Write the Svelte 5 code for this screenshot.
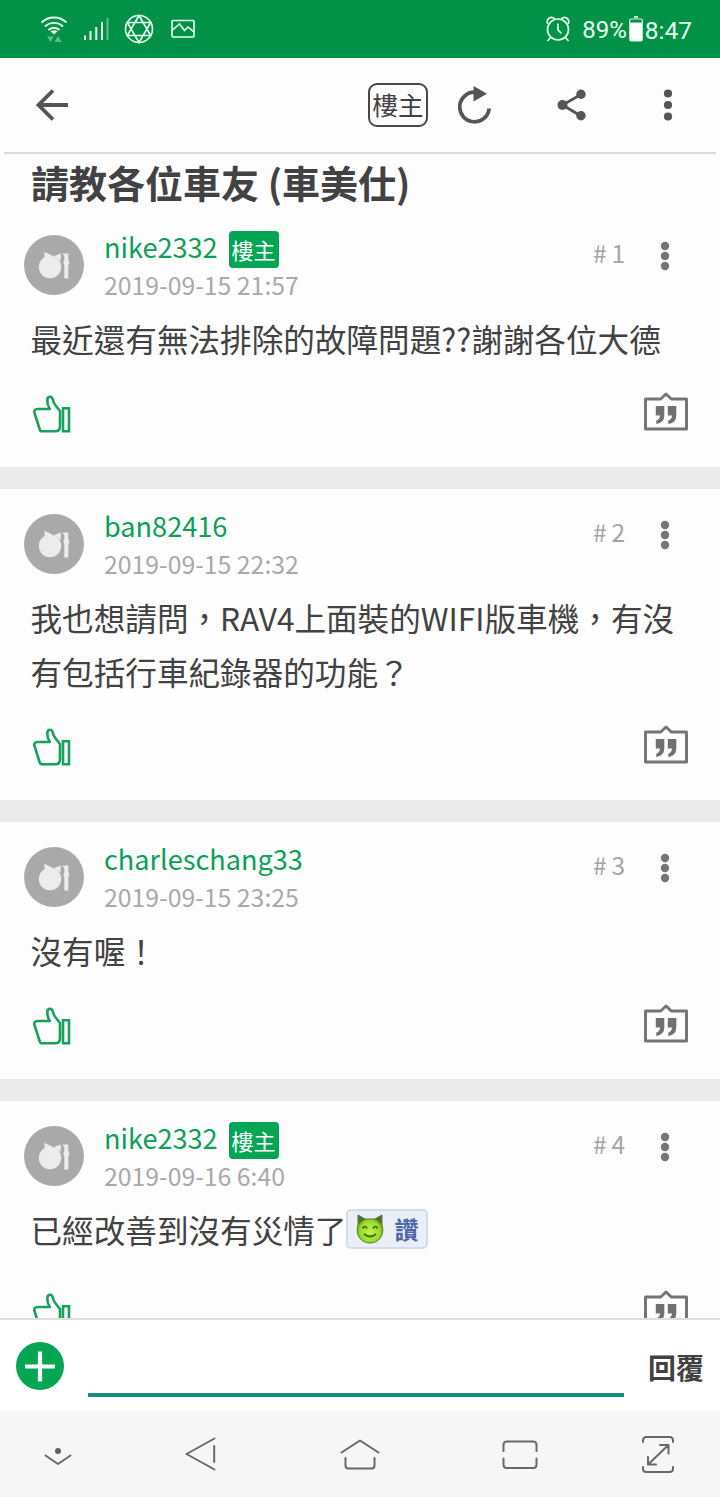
<script lang="ts">
	type Post = {
		floor: number;
		author: string;
		date: string;
		isOwner?: boolean;
		lines: string[];
		sticker?: string;
	};

	const title = '請教各位車友 (車美仕)';

	const posts: Post[] = [
		{
			floor: 1,
			author: 'nike2332',
			date: '2019-09-15 21:57',
			isOwner: true,
			lines: ['最近還有無法排除的故障問題??謝謝各位大德']
		},
		{
			floor: 2,
			author: 'ban82416',
			date: '2019-09-15 22:32',
			lines: ['我也想請問，RAV4上面裝的WIFI版車機，有沒', '有包括行車紀錄器的功能？']
		},
		{
			floor: 3,
			author: 'charleschang33',
			date: '2019-09-15 23:25',
			lines: ['沒有喔！']
		},
		{
			floor: 4,
			author: 'nike2332',
			date: '2019-09-16 6:40',
			isOwner: true,
			lines: ['已經改善到沒有災情了'],
			sticker: '讚'
		}
	];

	let reply = $state('');
</script>

<div class="screen" lang="zh-Hant">
	<div class="status-bar">
		<div class="status-bar__left">
			<svg width="28" height="30" viewBox="0 0 28 30" fill="none" stroke="#e6fff0" stroke-width="1.9">
				<path d="M1.5 8.5C8.5 1.8 19.5 1.8 26.5 8.5" />
				<path d="M5 12.5C10 7.6 18 7.6 23 12.5" />
				<path d="M8.5 16C11.600 13 16.400 13 19.5 16" />
				<path d="M10.5 17.300C12.5 15.800 15.5 15.800 17.5 17.300L14 20.5z" fill="#fff" stroke="none" />
				<path d="M7 22.5h7l-3.5 5.5zM14.5 28l3.5-6 3.5 6z" fill="#5ec08a" stroke="none" />
			</svg>
			<svg class="signal" width="26" height="24" viewBox="0 0 26 24" fill="#e6fff0">
				<path d="M1 18.5h2V23H1zM6.5 14h2v9h-2zM12.3 10h2v13h-2zM18 5h2v18h-2z" />
				<path d="M23.5 1h2v22h-2z" fill="#5ec08a" />
			</svg>
			<svg class="hexagram" width="30" height="30" viewBox="0 0 30 30" fill="none" stroke="#e6fff0" stroke-width="1.6">
				<circle cx="15" cy="15" r="13.5" />
				<path d="M15 1.5L26.7 21.5H3.3zM15 28.5L3.3 8.5h23.4z" />
			</svg>
			<svg class="picture" width="24" height="20" viewBox="0 0 24 20" fill="none" stroke="#e6fff0" stroke-width="1.6">
				<rect x="1" y="1.5" width="22" height="16.5" rx="1" />
				<path d="M1 11.5L8.5 5l5 6.5 3.5-3.500 6 5" />
			</svg>
		</div>
		<div class="status-bar__right">
			<svg class="alarm" width="24" height="26" viewBox="0 0 24 26" fill="none" stroke="#dcffea" stroke-width="1.7">
				<circle cx="12" cy="13.5" r="10.5" />
				<path d="M12 7.5V14l3.5 3.5M4.5 21.5L1.500 25M19.5 21.5l3 3.5M1.8 8C-.5 3 5 -.5 8.8 3M22.2 8C24.5 3 19 -.5 15.2 3" />
			</svg>
			<span class="percent">89%</span>
			<svg class="battery" width="14" height="26" viewBox="0 0 14 26" fill="none">
				<path d="M5 1h4" stroke="#fff" stroke-width="1.5" />
				<rect x=".75" y="3" width="12.5" height="22" rx="1.5" stroke="#d3f8e1" stroke-width="1.2" />
				<path d="M1 6.5h12V25H1z" fill="#fff" />
			</svg>
			<span class="clock">8:47</span>
		</div>
	</div>

	<header class="app-bar">
		<button class="back" aria-label="返回">
			<svg width="34" height="34" viewBox="0 0 34 34" fill="none" stroke="#555" stroke-width="3.8">
				<path d="M33 17H4M18 2.5L3.5 17 18 31.5" />
			</svg>
		</button>
		<button class="owner-filter">樓主</button>
		<button class="reload" aria-label="重新整理">
			<svg width="34" height="40" viewBox="0 0 34 40" fill="none">
				<path d="M31.2 23.5A14.8 14.8 0 1 1 17 7.2" stroke="#555" stroke-width="3.7" />
				<path d="M15.5 1L29 8.8 15.5 16.5z" fill="#555" />
			</svg>
		</button>
		<button class="share" aria-label="分享">
			<svg width="30" height="32" viewBox="0 0 30 32" fill="#555">
				<path d="M24 5.5L5.5 16 24 27" fill="none" stroke="#555" stroke-width="2.8" />
				<circle cx="5.5" cy="16" r="5" />
				<circle cx="24" cy="5.2" r="4.7" />
				<circle cx="24" cy="26.8" r="4.7" />
			</svg>
		</button>
		<button class="more" aria-label="更多">
			<svg width="10" height="32" viewBox="0 0 10 32" fill="#555">
				<circle cx="5" cy="4.5" r="4.1" />
				<circle cx="5" cy="16" r="4.1" />
				<circle cx="5" cy="27.5" r="4.1" />
			</svg>
		</button>
	</header>

	<main class="thread">
		<h1>{title}</h1>
		{#each posts as post (post.floor)}
			<article class="post">
				<div class="post__head">
					<svg class="avatar" width="60" height="60" viewBox="0 0 60 60">
						<circle cx="30" cy="30" r="30" fill="#a9a9a9" />
						<g fill="#ececec">
							<circle cx="26" cy="32" r="11.2" />
							<path d="M20.3 16.7L20.8 24l8.200-3zM37 18.500L30 21l6.500 5z" />
							<path d="M38.500 18.500H44.300V25l1.200 2.500-1.200 3V43.500h-4V30.500l-1-3 1-2.500v-3.500z" />
						</g>
					</svg>
					<div class="meta">
						<div class="meta__name">
							<span>{post.author}</span>
							{#if post.isOwner}
								<span class="owner-tag">樓主</span>
							{/if}
						</div>
						<time>{post.date}</time>
					</div>
					<span class="floor">#{'\u2009'}{post.floor}</span>
					<button class="post__menu" aria-label="選單">
						<svg width="10" height="30" viewBox="0 0 10 30" fill="#757575">
							<circle cx="5" cy="5" r="4.2" />
							<circle cx="5" cy="15" r="4.2" />
							<circle cx="5" cy="25" r="4.2" />
						</svg>
					</button>
				</div>

				<div class="post__body" class:has-sticker={post.sticker}>
					{#each post.lines as line}
						<p>
							{line}{#if post.sticker}<span class="sticker">
									<svg width="28" height="30" viewBox="0 0 28 30">
										<defs>
											<radialGradient id="imp" cx=".5" cy=".6" r=".6">
												<stop offset="0" stop-color="#c4f24a" />
												<stop offset=".65" stop-color="#99d92c" />
												<stop offset="1" stop-color="#4f861b" />
											</radialGradient>
										</defs>
										<path d="M2 1l7 4h10l7-4v10c3 10-3 18-12 18S-1 21 2 11z" fill="url(#imp)" stroke="#567e27" />
										<path d="M2 1l7 4-6 5zM26 1l-7 4 6 5z" fill="#557028" />
										<path d="M6.5 14.5q2.5-4 4.5 0M17 14.5q2.5-4 4.5 0M8 20q6 5 12 0" fill="none" stroke="#426b13" stroke-width="1.7" />
									</svg>
									<b>{post.sticker}</b>
								</span>{/if}
						</p>
					{/each}
				</div>

				<div class="post__actions">
					<button aria-label="推">
						<svg width="40" height="40" viewBox="0 0 40 40" fill="none" stroke="#16a25a" stroke-width="2.6">
							<path d="M9.300 37.200C8.500 37 8 36.300 7.600 35L2.500 19C1.800 16.500 3 15 5.500 15H17.800C16.500 13 15.300 10.500 15.300 6.500 15.300 4 16.500 2.700 18 2.700c1.600 0 2.500 1.300 3 3.300.4 2.200 1 3.600 2.200 5L28 17v14.500c0 3.500-1.300 5.700-4 5.700z" stroke-linejoin="round" />
							<path d="M31 14.300h6v22.900h-6z" />
						</svg>
					</button>
					<button class="quote" aria-label="引用">
						<svg width="44" height="40" viewBox="0 0 44 40" fill="none">
							<path d="M1.5 7h15.2L22 2l5.3 5h15.2v30h-41z" stroke="#757575" stroke-width="3" stroke-linejoin="round" />
							<path d="M11.800 14h8.5v9q0 8-8 9v-3.500q3.500-.8 3.700-5h-4.200zM23.800 14h8.500v9q0 8-8 9v-3.500q3.500-.8 3.700-5h-4.200z" fill="#707070" />
						</svg>
					</button>
				</div>
			</article>
		{/each}
	</main>

	<form class="reply-bar">
		<button type="button" class="add" aria-label="新增">
			<svg width="48" height="48" viewBox="0 0 48 48">
				<circle cx="24" cy="24" r="24" fill="#04a653" />
				<path d="M9 24.500h30M24 9.500v30" stroke="#fff" stroke-width="4.200" />
			</svg>
		</button>
		<input bind:value={reply} aria-label="回覆內容" />
		<button type="submit" class="send">回覆</button>
	</form>

	<nav class="nav-bar">
		<svg width="36" height="40" viewBox="0 0 36 40">
			<circle cx="18" cy="17" r="3" />
			<path d="M5.5 21.5L18 30l12.5-8.5" />
		</svg>
		<svg class="nav-back" width="36" height="40" viewBox="0 0 36 40">
			<path d="M31.5 4.500L3.500 20l28 15.500M31.200 12v16" />
		</svg>
		<svg class="nav-home" width="40" height="40" viewBox="0 0 40 40">
			<path d="M1.5 18.5L20 6.5l18.500 12M5.500 24v7.500q0 3 3 3h23q3 0 3-3V24" />
		</svg>
		<svg class="nav-recent" width="40" height="40" viewBox="0 0 40 40">
			<path d="M3.500 17v-6q0-3.500 3.500-3.500h26q3.500 0 3.500 3.500v6M3.500 24.500v6q0 3.500 3.500 3.500h26q3.500 0 3.500-3.500v-6" />
		</svg>
		<svg class="nav-full" width="36" height="40" viewBox="0 0 36 40">
			<path d="M3 8V6.500Q3 3 6.500 3h23Q33 3 33 6.500V8M3 33v1.500Q3 38 6.500 38h23q3.500 0 3.500-3.500V33M8 30.500L28.500 11M20 11h8.500v8.500M8 23v7.500h8" />
		</svg>
	</nav>
</div>

<style>
	:global(body) { margin: 0; background: #fdfdfd; }

	.screen {
		display: flex;
		width: 720px;
		height: 1497px;
		overflow: hidden;
		flex-direction: column;
		color: #424242;
		background: #fdfdfd;
		font-family: 'Noto Sans CJK TC', sans-serif;
	}

	svg { display: block; flex: none; }

	button {
		padding: 0;
		color: inherit;
		background: none;
		border: 0;
		font: inherit;
	}

	.status-bar {
		display: flex;
		height: 58px;
		padding: 0 28px 0 40px;
		flex: none;
		align-items: center;
		justify-content: space-between;
		color: #e6fff0;
		background: #029247;
		font-family: Roboto, sans-serif;
		font-size: 24px;
	}

	.status-bar__left,
	.status-bar__right {
		display: flex;
		align-items: center;
	}

	.signal { margin-left: 15px; }
	.hexagram { margin-left: 15px; }
	.picture { margin-left: 17px; }
	.percent { margin: 2px 2px 0 12px; }
	.clock { margin: 2px 0 0 2px; font-size: 24.5px; }

	.app-bar {
		display: flex;
		height: 94px;
		margin: 0 4px;
		padding: 0 43px 0 31px;
		flex: none;
		align-items: center;
		border-bottom: 2px solid #dcdcdc;
	}

	.owner-filter {
		display: flex;
		width: 60px;
		height: 44px;
		margin-left: auto;
		justify-content: center;
		border: 2px solid #484848;
		border-radius: 9px;
		font-size: 25.5px;
		line-height: 38px;
		white-space: nowrap;
	}

	.reload { margin-left: 30px; }
	.share { margin-left: 65px; }
	.more { margin-left: 76px; }

	.thread {
		min-height: 0;
		flex: 1;
		overflow: hidden;
	}

	h1 {
		height: 56px;
		margin: 0;
		padding-left: 31px;
		font-size: 38px;
		font-weight: 700;
		line-height: 56px;
		white-space: nowrap;
	}

	.post { border-bottom: 22px solid #ebebeb; }

	.post__head {
		display: flex;
		height: 101px;
		padding: 0 50px 0 24px;
		box-sizing: border-box;
		align-items: flex-start;
	}

	.avatar { margin-top: 25px; }

	.meta {
		margin: 18px 0 0 20px;
		flex: 1;
	}

	.meta__name {
		display: flex;
		height: 38px;
		gap: 11px;
		align-items: center;
		color: #0ba155;
		font-size: 27.1px;
		line-height: 38px;
	}

	.owner-tag {
		height: 37px;
		padding: 0 3px;
		margin-top: 4px;
		color: #fff;
		background: #04a653;
		border-radius: 4px;
		font-size: 22px;
		line-height: 36px;
	}

	time {
		display: block;
		color: #a9a9a9;
		font-size: 24.8px;
		line-height: 36px;
	}

	.floor {
		margin-top: 25px;
		color: #a4a4a4;
		font-size: 24.5px;
		line-height: 36px;
	}

	.post__menu { margin: 31px 0 0 35px; }

	.post__body {
		padding-left: 30.5px;
		font-size: 31.6px;
	}

	.post__body.has-sticker { padding-bottom: 7px; }

	p {
		display: flex;
		height: 54px;
		margin: 0;
		align-items: center;
		line-height: 54px;
		white-space: nowrap;
	}

	.sticker {
		display: flex;
		width: 82px;
		height: 40px;
		padding: 0 8px;
		box-sizing: border-box;
		align-items: center;
		justify-content: space-between;
		color: #4c66aa;
		background: #e9eef7;
		border: 2px solid #d3dcea;
		border-radius: 5px;
		font-size: 24px;
		line-height: 36px;
	}

	.post__actions {
		display: flex;
		height: 102px;
		padding: 32px 32px 0;
		box-sizing: border-box;
		align-items: flex-start;
		justify-content: space-between;
	}

	.post__actions button { margin-top: -3px; }
	.post__actions .quote { margin-top: -5px; }
	.post__actions { padding-top: 32px; }

	.reply-bar {
		display: flex;
		height: 93px;
		padding: 0 16px;
		box-sizing: border-box;
		flex: none;
		align-items: center;
		background: #fff;
		border-top: 2px solid #dedede;
	}

	input {
		width: 536px;
		height: 63px;
		margin: 0 24px;
		padding: 0 8px;
		box-sizing: border-box;
		color: inherit;
		background: none;
		border: 0;
		border-bottom: 4px solid #178f7e;
		outline: 0;
		font: 28px 'Noto Sans CJK TC', sans-serif;
	}

	.send {
		padding-top: 2px;
		font-size: 28px;
		font-weight: 700;
		white-space: nowrap;
	}

	.nav-bar {
		display: flex;
		height: 86px;
		padding: 0 44px 0 40px;
		box-sizing: border-box;
		flex: none;
		align-items: center;
		background: #f6f6f6;
	}

	.nav-bar path { fill: none; stroke: #686868; stroke-width: 2; stroke-linecap: round; stroke-linejoin: round; }
	.nav-bar circle { fill: #606060; }
	.nav-back { margin-left: 107px; }
	.nav-home { margin-left: 121px; }
	.nav-recent { margin-left: 120px; }
	.nav-full { margin-left: 100px; }
</style>
